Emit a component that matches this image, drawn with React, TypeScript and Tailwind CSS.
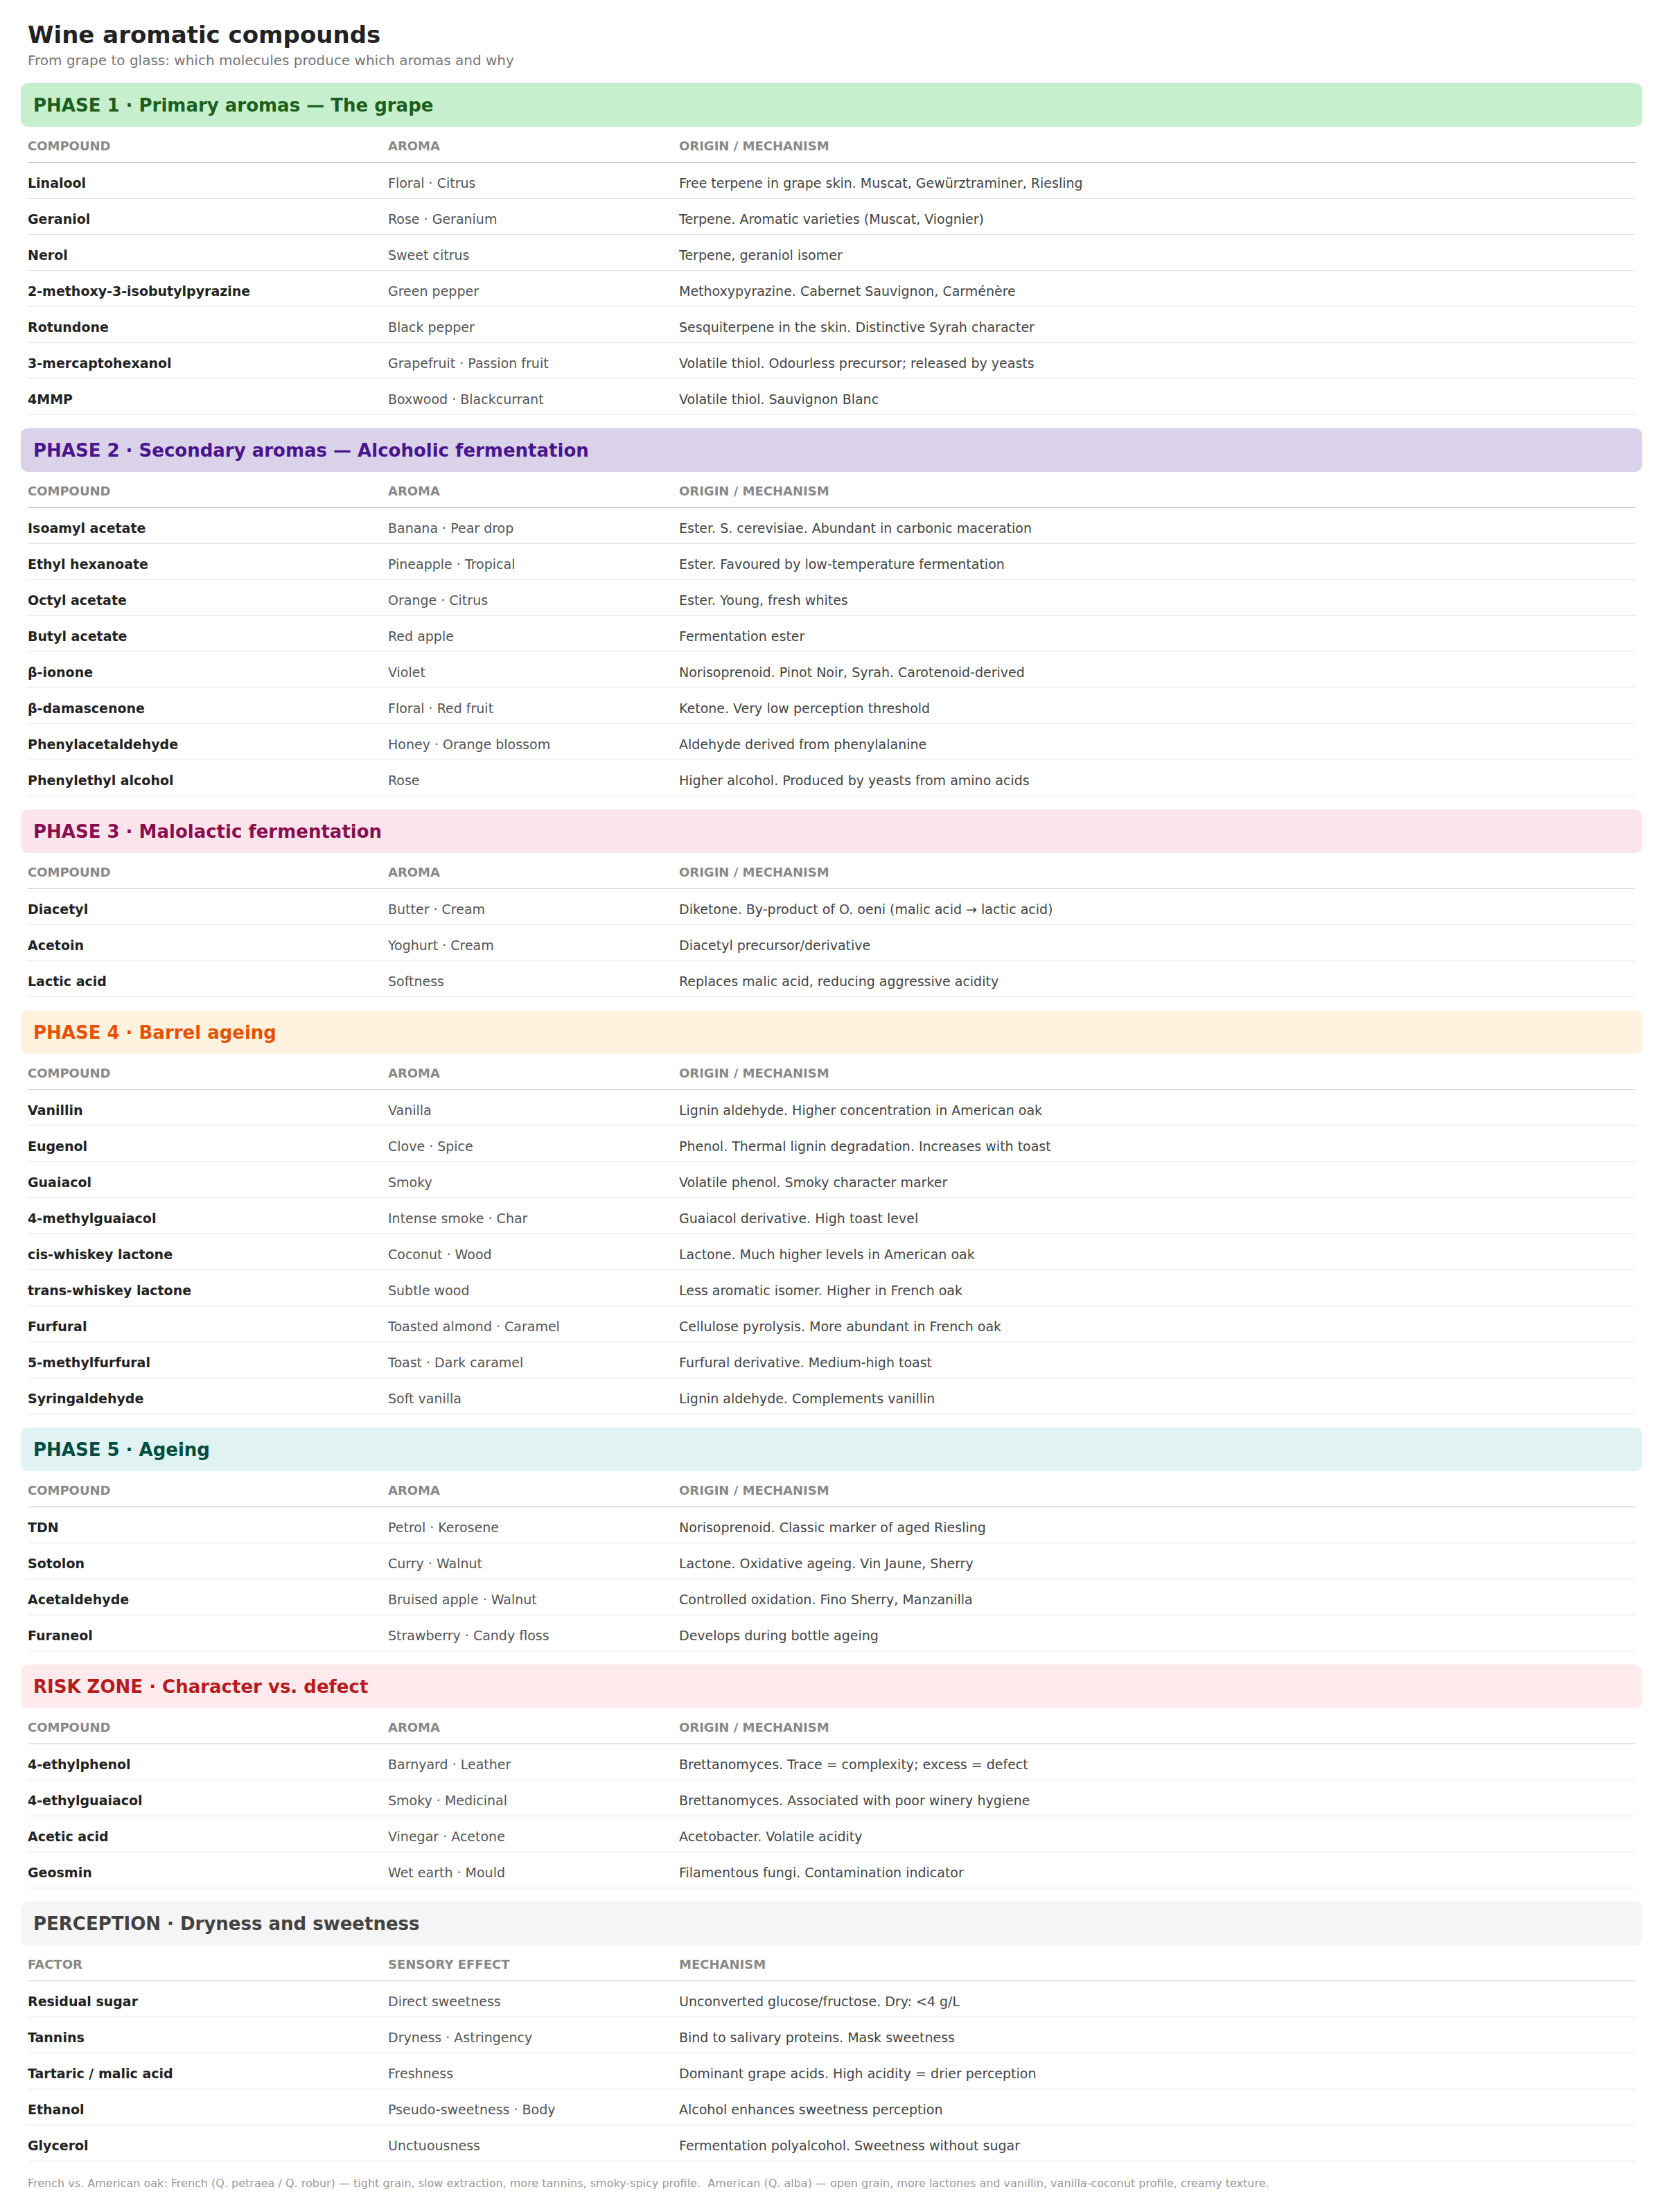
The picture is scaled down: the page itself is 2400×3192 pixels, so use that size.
import React from "react";

type Row = [string, string, string];
type Section = {
  title: string;
  bg: string;
  fg: string;
  cols: [string, string, string];
  rows: Row[];
};

const STD: [string, string, string] = ["COMPOUND", "AROMA", "ORIGIN / MECHANISM"];

const sections: Section[] = [
  {
    title: "PHASE 1 · Primary aromas — The grape",
    bg: "bg-[#c6efce]",
    fg: "text-[#1b5e20]",
    cols: STD,
    rows: [
      ["Linalool", "Floral · Citrus", "Free terpene in grape skin. Muscat, Gewürztraminer, Riesling"],
      ["Geraniol", "Rose · Geranium", "Terpene. Aromatic varieties (Muscat, Viognier)"],
      ["Nerol", "Sweet citrus", "Terpene, geraniol isomer"],
      ["2-methoxy-3-isobutylpyrazine", "Green pepper", "Methoxypyrazine. Cabernet Sauvignon, Carménère"],
      ["Rotundone", "Black pepper", "Sesquiterpene in the skin. Distinctive Syrah character"],
      ["3-mercaptohexanol", "Grapefruit · Passion fruit", "Volatile thiol. Odourless precursor; released by yeasts"],
      ["4MMP", "Boxwood · Blackcurrant", "Volatile thiol. Sauvignon Blanc"],
    ],
  },
  {
    title: "PHASE 2 · Secondary aromas — Alcoholic fermentation",
    bg: "bg-[#d9d2e9]",
    fg: "text-[#4a148c]",
    cols: STD,
    rows: [
      ["Isoamyl acetate", "Banana · Pear drop", "Ester. S. cerevisiae. Abundant in carbonic maceration"],
      ["Ethyl hexanoate", "Pineapple · Tropical", "Ester. Favoured by low-temperature fermentation"],
      ["Octyl acetate", "Orange · Citrus", "Ester. Young, fresh whites"],
      ["Butyl acetate", "Red apple", "Fermentation ester"],
      ["β-ionone", "Violet", "Norisoprenoid. Pinot Noir, Syrah. Carotenoid-derived"],
      ["β-damascenone", "Floral · Red fruit", "Ketone. Very low perception threshold"],
      ["Phenylacetaldehyde", "Honey · Orange blossom", "Aldehyde derived from phenylalanine"],
      ["Phenylethyl alcohol", "Rose", "Higher alcohol. Produced by yeasts from amino acids"],
    ],
  },
  {
    title: "PHASE 3 · Malolactic fermentation",
    bg: "bg-[#fce4ec]",
    fg: "text-[#880e4f]",
    cols: STD,
    rows: [
      ["Diacetyl", "Butter · Cream", "Diketone. By-product of O. oeni (malic acid → lactic acid)"],
      ["Acetoin", "Yoghurt · Cream", "Diacetyl precursor/derivative"],
      ["Lactic acid", "Softness", "Replaces malic acid, reducing aggressive acidity"],
    ],
  },
  {
    title: "PHASE 4 · Barrel ageing",
    bg: "bg-[#fff3e0]",
    fg: "text-[#e65100]",
    cols: STD,
    rows: [
      ["Vanillin", "Vanilla", "Lignin aldehyde. Higher concentration in American oak"],
      ["Eugenol", "Clove · Spice", "Phenol. Thermal lignin degradation. Increases with toast"],
      ["Guaiacol", "Smoky", "Volatile phenol. Smoky character marker"],
      ["4-methylguaiacol", "Intense smoke · Char", "Guaiacol derivative. High toast level"],
      ["cis-whiskey lactone", "Coconut · Wood", "Lactone. Much higher levels in American oak"],
      ["trans-whiskey lactone", "Subtle wood", "Less aromatic isomer. Higher in French oak"],
      ["Furfural", "Toasted almond · Caramel", "Cellulose pyrolysis. More abundant in French oak"],
      ["5-methylfurfural", "Toast · Dark caramel", "Furfural derivative. Medium-high toast"],
      ["Syringaldehyde", "Soft vanilla", "Lignin aldehyde. Complements vanillin"],
    ],
  },
  {
    title: "PHASE 5 · Ageing",
    bg: "bg-[#e0f2f1]",
    fg: "text-[#004d40]",
    cols: STD,
    rows: [
      ["TDN", "Petrol · Kerosene", "Norisoprenoid. Classic marker of aged Riesling"],
      ["Sotolon", "Curry · Walnut", "Lactone. Oxidative ageing. Vin Jaune, Sherry"],
      ["Acetaldehyde", "Bruised apple · Walnut", "Controlled oxidation. Fino Sherry, Manzanilla"],
      ["Furaneol", "Strawberry · Candy floss", "Develops during bottle ageing"],
    ],
  },
  {
    title: "RISK ZONE · Character vs. defect",
    bg: "bg-[#ffebee]",
    fg: "text-[#b71c1c]",
    cols: STD,
    rows: [
      ["4-ethylphenol", "Barnyard · Leather", "Brettanomyces. Trace = complexity; excess = defect"],
      ["4-ethylguaiacol", "Smoky · Medicinal", "Brettanomyces. Associated with poor winery hygiene"],
      ["Acetic acid", "Vinegar · Acetone", "Acetobacter. Volatile acidity"],
      ["Geosmin", "Wet earth · Mould", "Filamentous fungi. Contamination indicator"],
    ],
  },
  {
    title: "PERCEPTION · Dryness and sweetness",
    bg: "bg-[#f5f5f5]",
    fg: "text-[#424242]",
    cols: ["FACTOR", "SENSORY EFFECT", "MECHANISM"],
    rows: [
      ["Residual sugar", "Direct sweetness", "Unconverted glucose/fructose. Dry: <4 g/L"],
      ["Tannins", "Dryness · Astringency", "Bind to salivary proteins. Mask sweetness"],
      ["Tartaric / malic acid", "Freshness", "Dominant grape acids. High acidity = drier perception"],
      ["Ethanol", "Pseudo-sweetness · Body", "Alcohol enhances sweetness perception"],
      ["Glycerol", "Unctuousness", "Fermentation polyalcohol. Sweetness without sugar"],
    ],
  },
];

function SectionBlock({ s, first }: { s: Section; first: boolean }) {
  return (
    <div className={first ? "mt-[21px]" : "mt-[19px]"}>
      <div className={`${s.bg} mx-[-10px] h-[63px] rounded-[10px] pl-[18px] flex items-center`}>
        <h2 className={`${s.fg} text-[26px] leading-[32px] font-bold`}>{s.title}</h2>
      </div>
      <div className="grid grid-cols-[520px_420px_1fr] border-b border-[#c4c4c4] pt-[17px] pb-[12px] text-[18px] leading-[22px] font-bold text-[#888888]">
        <div>{s.cols[0]}</div>
        <div>{s.cols[1]}</div>
        <div>{s.cols[2]}</div>
      </div>
      {s.rows.map((r, i) => (
        <div
          key={i}
          className="grid grid-cols-[520px_420px_1fr] border-b border-[#e4e4e4] pt-[17px] pb-[10px] text-[19px] leading-[24px]"
        >
          <div className="font-bold text-[#222222]">{r[0]}</div>
          <div className="text-[#555555]">{r[1]}</div>
          <div className="text-[#444444]">{r[2]}</div>
        </div>
      ))}
    </div>
  );
}

export default function App() {
  return (
    <div className="min-h-screen bg-white px-[40px] pt-[30px] pb-[30px] font-['DejaVu_Sans',sans-serif]">
      <h1 className="text-[34px] leading-[40px] font-bold text-[#222222]">Wine aromatic compounds</h1>
      <p className="mt-[5px] text-[20px] leading-[24px] text-[#777777]">
        From grape to glass: which molecules produce which aromas and why
      </p>
      {sections.map((s, i) => (
        <SectionBlock key={i} s={s} first={i === 0} />
      ))}
      <p className="mt-[22px] text-[16px] leading-[20px] text-[#999999]">
        French vs. American oak: French (Q. petraea / Q. robur) — tight grain, slow extraction, more tannins, smoky-spicy profile.{"\u00a0 "}American (Q. alba) — open grain, more lactones and vanillin, vanilla-coconut profile, creamy texture.
      </p>
    </div>
  );
}
